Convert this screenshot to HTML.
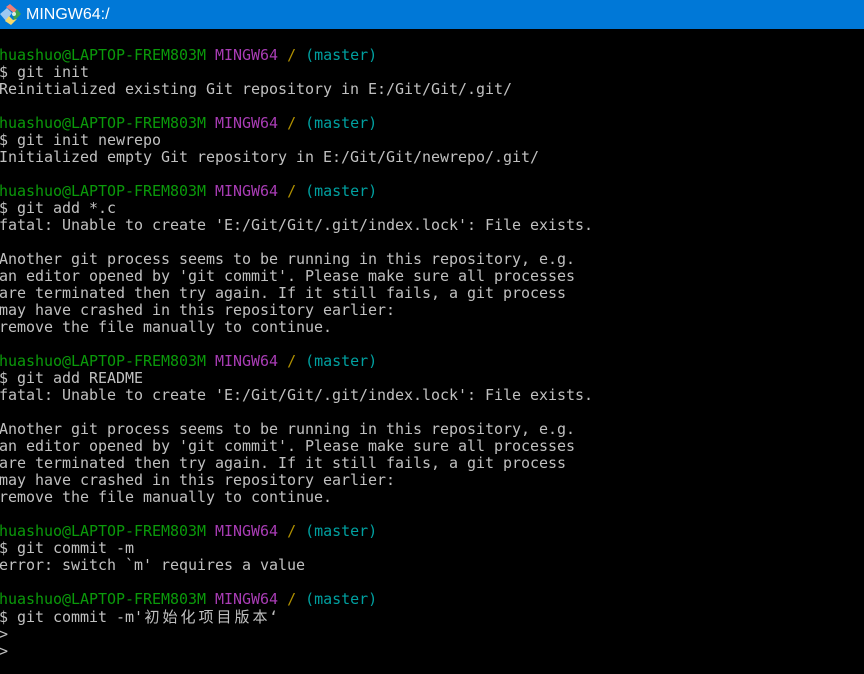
<!DOCTYPE html>
<html>
<head>
<meta charset="utf-8">
<style>
html,body{margin:0;padding:0;background:#000;width:864px;height:674px;overflow:hidden}
#bar{position:absolute;left:0;top:0;width:864px;height:29px;background:#0078d7}
#title{position:absolute;left:26px;top:5px;font:16px/19px "Liberation Sans",sans-serif;color:#fff;white-space:pre}
#ico{position:absolute;left:0;top:0}
#term{position:absolute;left:-1px;top:47px;margin:0;font:15px/17px "DejaVu Sans Mono","Noto Sans CJK SC",monospace;letter-spacing:-0.03px;color:#c0c0c0;white-space:pre}
.g{color:#0a9a0a}.m{color:#a83cb4}.y{color:#b09000}.c{color:#00a0a0}
.z{display:inline-block;width:18px;text-align:center;font-family:"Noto Sans CJK SC",sans-serif;font-weight:400}
</style>
</head>
<body>
<div id="bar"></div>
<svg id="ico" width="24" height="28" viewBox="0 0 24 28">
<polygon points="0,14 7,8 12,13 6,21" fill="#9cc8f2"/>
<polygon points="6,7 10,4 17,10 14,13 10,10" fill="#ee7f78"/>
<polygon points="13,15 17,9 21,14 14,21" fill="#3fa34d"/>
<polygon points="5,21 9,16 13,20 17,19 11,25" fill="#f6d96a"/>
<circle cx="14" cy="14" r="2" fill="#d8efe0"/>
</svg>
<div id="title">MINGW64:/</div>
<pre id="term"><span class="g">huashuo@LAPTOP-FREM803M</span> <span class="m">MINGW64</span> <span class="y">/</span> <span class="c">(master)</span>
$ git init
Reinitialized existing Git repository in E:/Git/Git/.git/

<span class="g">huashuo@LAPTOP-FREM803M</span> <span class="m">MINGW64</span> <span class="y">/</span> <span class="c">(master)</span>
$ git init newrepo
Initialized empty Git repository in E:/Git/Git/newrepo/.git/

<span class="g">huashuo@LAPTOP-FREM803M</span> <span class="m">MINGW64</span> <span class="y">/</span> <span class="c">(master)</span>
$ git add *.c
fatal: Unable to create 'E:/Git/Git/.git/index.lock': File exists.

Another git process seems to be running in this repository, e.g.
an editor opened by 'git commit'. Please make sure all processes
are terminated then try again. If it still fails, a git process
may have crashed in this repository earlier:
remove the file manually to continue.

<span class="g">huashuo@LAPTOP-FREM803M</span> <span class="m">MINGW64</span> <span class="y">/</span> <span class="c">(master)</span>
$ git add README
fatal: Unable to create 'E:/Git/Git/.git/index.lock': File exists.

Another git process seems to be running in this repository, e.g.
an editor opened by 'git commit'. Please make sure all processes
are terminated then try again. If it still fails, a git process
may have crashed in this repository earlier:
remove the file manually to continue.

<span class="g">huashuo@LAPTOP-FREM803M</span> <span class="m">MINGW64</span> <span class="y">/</span> <span class="c">(master)</span>
$ git commit -m
error: switch `m' requires a value

<span class="g">huashuo@LAPTOP-FREM803M</span> <span class="m">MINGW64</span> <span class="y">/</span> <span class="c">(master)</span>
$ git commit -m'<span class="z">初</span><span class="z">始</span><span class="z">化</span><span class="z">项</span><span class="z">目</span><span class="z">版</span><span class="z">本</span>‘
&gt;
&gt;</pre>
</body>
</html>
